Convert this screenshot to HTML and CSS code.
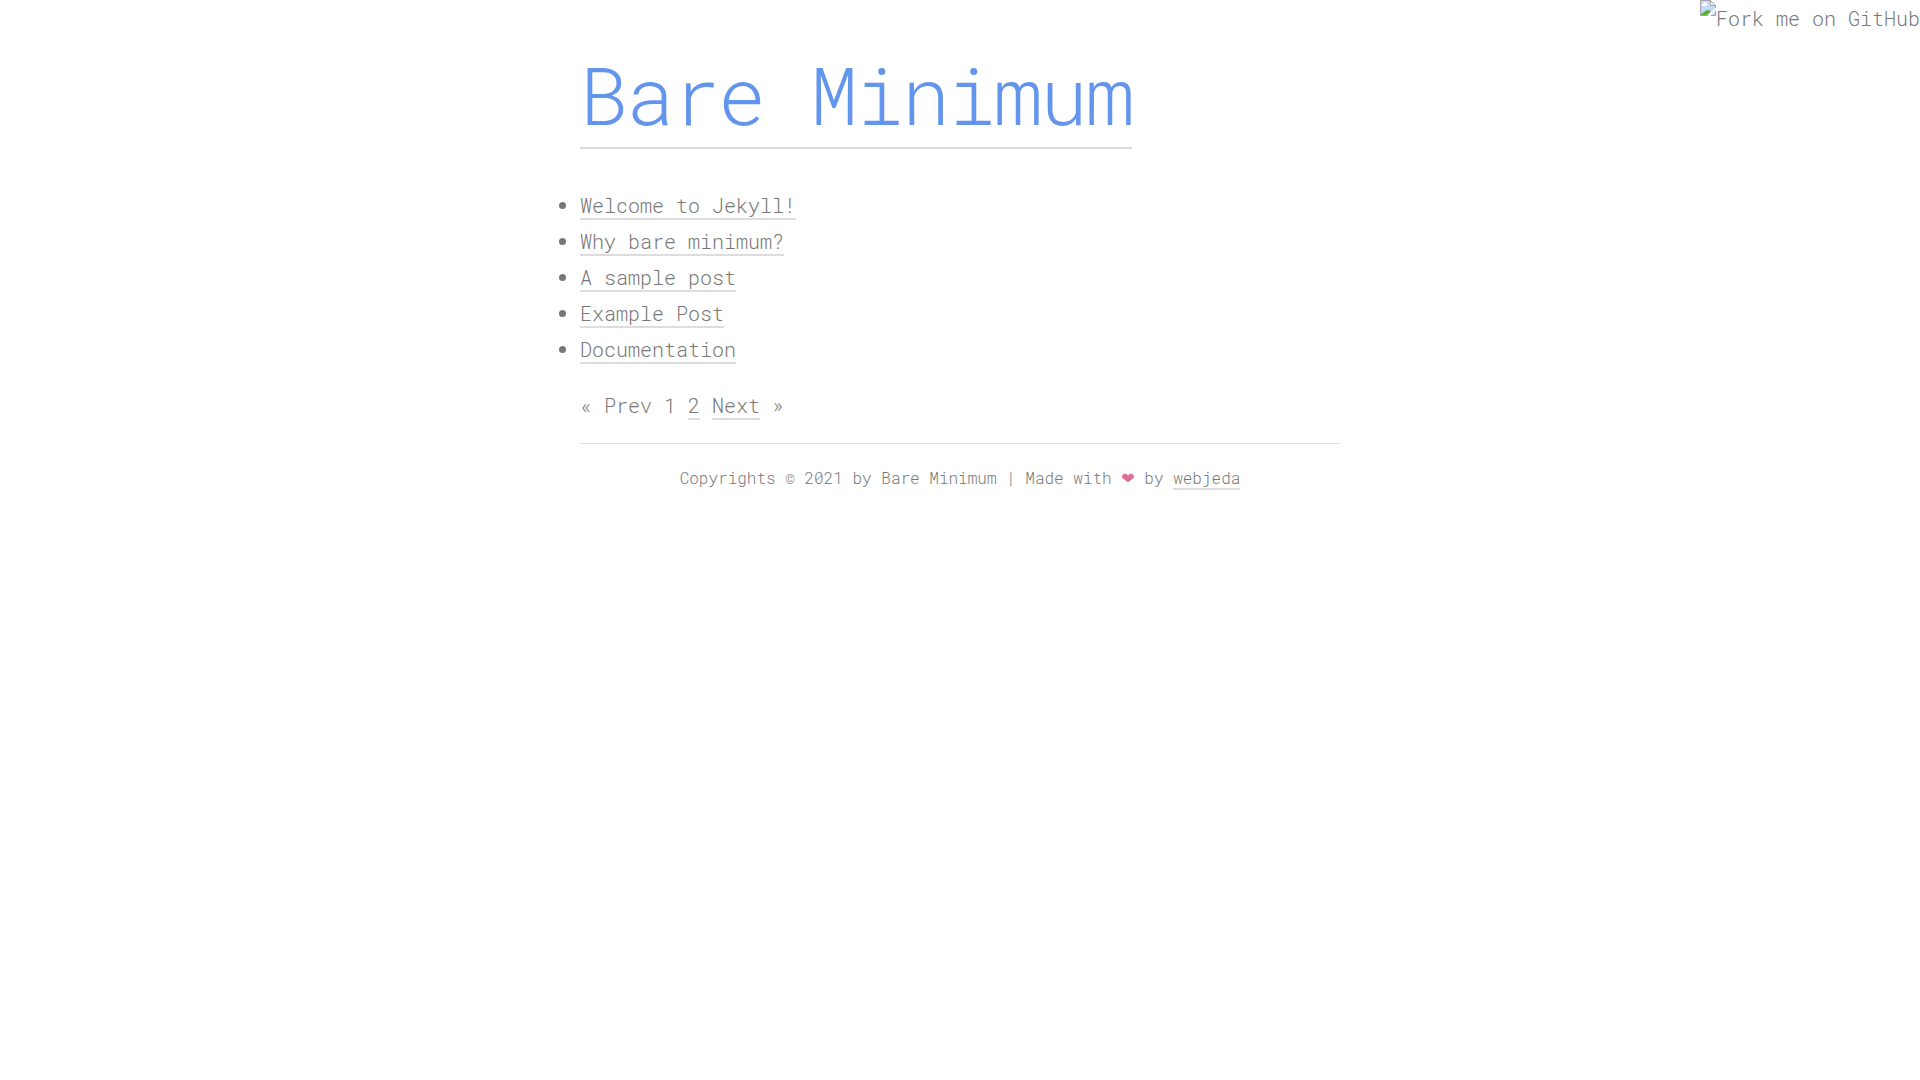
FILE: index.html
```html
<!DOCTYPE html>
<html lang="en">
<head>
  <meta charset="UTF-8">
  <meta name="viewport" content="width=device-width, initial-scale=1">
  <title>Bare Minimum</title>
  <link rel="stylesheet" href="styles.css">
</head>
<body>
  <a class="fork" href="#">
    <svg class="fork-icon" width="16" height="16" viewBox="0 0 16 16" aria-hidden="true">
      <path d="M.5 15.500V.5h10l5 5V8" fill="#c6d8f8" stroke="#a5a5a5"/>
      <path d="M1 1h9v5h5v2l-7 7H1z" fill="#c6d8f8"/>
      <path d="M10.500 .5v5h5z" fill="#fff" stroke="#a5a5a5"/>
      <path d="M2.500 6a1.500 1.500 0 0 1 1-2.500 1.500 1.500 0 0 1 3 0A1.500 1.500 0 0 1 7 6z" fill="#fff"/>
      <path d="M1 15v-1c3-1 4-4 7-4 2 0 2 1 3 2l-3 3z" fill="#5aad35"/>
      <path d="M16 8v2l-5 5H7z" fill="#fff"/>
      <path d="M15.500 11v4.500H11z" fill="#c6d8f8"/>
      <path d="M0 15.500h8M11 15.500h4.500V11" fill="none" stroke="#a5a5a5"/>
    </svg>Fork me on GitHub</a>

  <div class="container">
    <header>
      <h1><a class="site-title" href="#">Bare Minimum</a></h1>
    </header>

    <main>
      <ul class="posts">
        <li><a href="#">Welcome to Jekyll!</a></li>
        <li><a href="#">Why bare minimum?</a></li>
        <li><a href="#">A sample post</a></li>
        <li><a href="#">Example Post</a></li>
        <li><a href="#">Documentation</a></li>
      </ul>

      <!-- Pagination -->
      <nav class="pagination">
        <span>&laquo; Prev</span>
        <span>1</span>
        <a href="#">2</a>
        <a href="#">Next</a> &raquo;
      </nav>
    </main>

    <footer>
      Copyrights &copy; 2021 by Bare Minimum | Made with <span class="heart">❤</span> by <a href="#">webjeda</a>
    </footer>
  </div>
</body>
</html>
```
FILE: styles.css
```css
body {
  margin: 0;
  font-family: "Roboto Mono", "DejaVu Sans Mono", monospace;
  font-size: 20px;
  font-weight: 300;
  line-height: 36px;
  color: #777;
}

a {
  color: #777;
  text-decoration: none;
  border-bottom: 2px solid #ddd;
}

.container {
  max-width: 760px;
  margin: 0 auto;
  padding: 0 20px;
}

h1 {
  margin: 42px 0 40px;
  font-size: 80px;
  font-weight: 300;
  line-height: 105px;
  letter-spacing: -2px;
}

.site-title {
  color: #6495ed;
}

.posts {
  margin: 0 0 20px;
  padding: 0;
}

footer {
  margin-top: 20px;
  padding: 16px 0;
  border-top: 1px solid #ddd;
  font-size: 16px;
  text-align: center;
}

.heart {
  font-family: "DejaVu Sans", sans-serif;
  font-weight: 700;
  color: #db7093;
}

.fork {
  position: absolute;
  top: 0;
  right: 0;
  border: 0;
}

.fork-icon {
  vertical-align: top;
}
```
